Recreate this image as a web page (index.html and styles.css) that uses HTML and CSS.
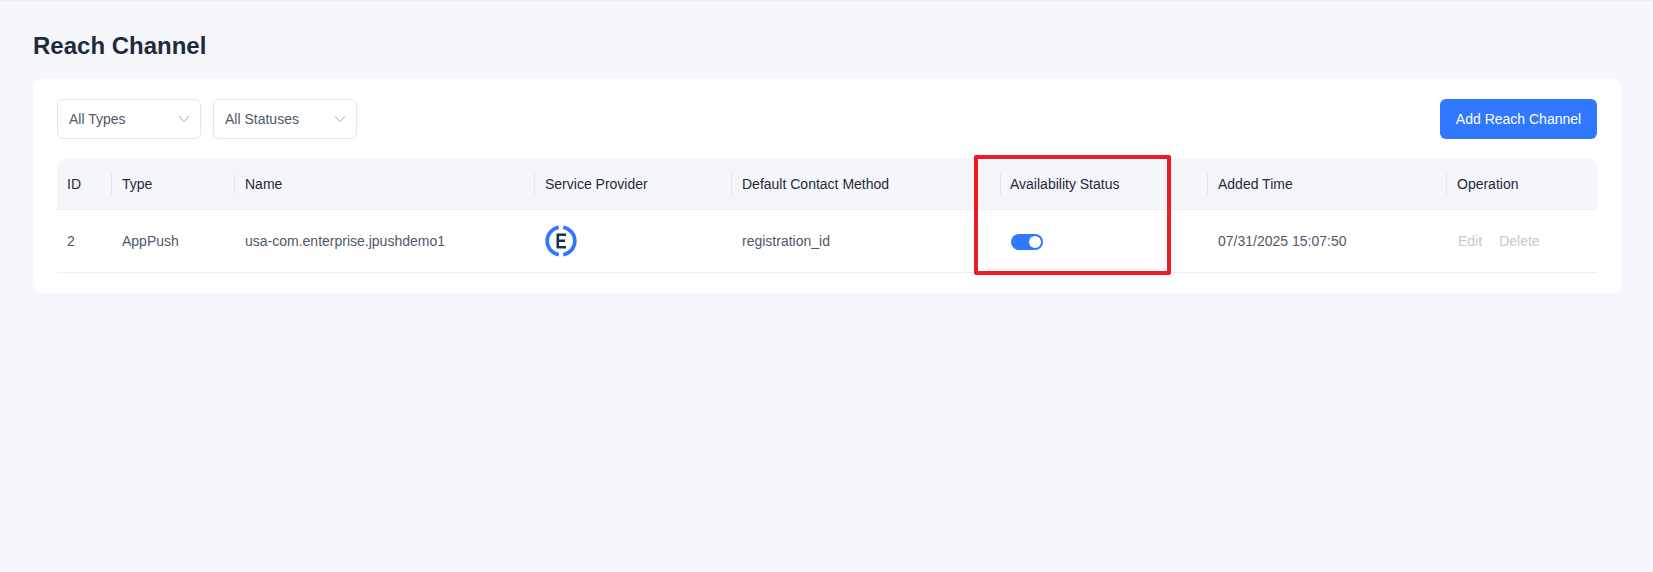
FILE: index.html
```html
<!DOCTYPE html>
<html lang="en">
<head>
    <meta charset="UTF-8" />
    <title>Reach Channel</title>
    <link rel="stylesheet" href="styles.css">
</head>
<body>
<div class="topline"></div>
<main class="page">
    <h1>Reach Channel</h1>
    <section class="card">
        <div class="toolbar">
            <div class="filters">
                <div class="select"><span>All Types</span>
                    <svg class="chevron" viewBox="0 0 12 8"><path d="M1 1.500l5 5 5-5" /></svg>
                </div>
                <div class="select"><span>All Statuses</span>
                    <svg class="chevron" viewBox="0 0 12 8"><path d="M1 1.500l5 5 5-5" /></svg>
                </div>
            </div>
            <button class="btn">Add Reach Channel</button>
        </div>
        <table class="table">
            <colgroup>
                <col class="col-id" /><col class="col-type" /><col class="col-name" /><col class="col-provider" />
                <col class="col-contact" /><col class="col-status" /><col class="col-time" /><col class="col-op" />
            </colgroup>
            <thead>
                <tr>
                    <th><div class="th-first">ID</div></th>
                    <th><div>Type</div></th>
                    <th><div>Name</div></th>
                    <th><div>Service Provider</div></th>
                    <th><div>Default Contact Method</div></th>
                    <th><div class="th-status">Availability Status</div></th>
                    <th><div>Added Time</div></th>
                    <th><div>Operation</div></th>
                </tr>
            </thead>
            <tbody>
                <tr>
                    <td>2</td>
                    <td>AppPush</td>
                    <td>usa-com.enterprise.jpushdemo1</td>
                    <td>
                        <svg class="provider" viewBox="0 0 32 32">
                            <path class="ring" d="M13.800 2.200A14 14 0 0 0 13.800 29.800" />
                            <path class="ring" d="M18.200 2.200A14 14 0 0 1 18.200 29.800" />
                            <path class="letter" d="M11.500 9.800h9.500M12.800 8.500v15M11.500 22.200h9.500M11.500 15.800h8.500" />
                        </svg>
                    </td>
                    <td>registration_id</td>
                    <td><span class="switch"><span class="knob"></span></span></td>
                    <td>07/31/2025 15:07:50</td>
                    <td class="ops"><a>Edit</a><a>Delete</a></td>
                </tr>
            </tbody>
        </table>
    </section>
</main>
<div class="highlight"></div>
</body>
</html>
```

FILE: styles.css
```css
* {
    box-sizing: border-box;
    margin: 0;
    padding: 0;
}

body {
    background: #f5f7fb;
    color: #1f2a3d;
    font-family: "Liberation Sans", Arial, sans-serif;
    font-size: 14px;
    height: 572px;
    overflow: hidden;
    position: relative;
}

.topline {
    height: 1px;
    background: #eef0f4;
}

.page {
    padding: 0 32px 0 33px;
}

h1 {
    font-size: 24px;
    font-weight: 700;
    line-height: 30px;
    margin-top: 30px;
    margin-bottom: 18px;
    color: #1f2a3d;
}

.card {
    background: #fff;
    border-radius: 8px;
    padding: 20px 24px;
}

.toolbar {
    display: flex;
    justify-content: space-between;
    margin-bottom: 20px;
}

.filters {
    display: flex;
    gap: 12px;
}

.select {
    width: 144px;
    height: 40px;
    border: 1px solid #e5e6eb;
    border-radius: 6px;
    padding: 0 10px 0 11px;
    display: flex;
    align-items: center;
    justify-content: space-between;
    color: #4e5969;
}

.chevron {
    width: 12px;
    height: 8px;
    fill: none;
    stroke: #c4c8d0;
    stroke-width: 1.2;
}

.btn {
    width: 157px;
    height: 40px;
    background: #3078fd;
    color: #fff;
    border: none;
    border-radius: 6px;
    font-family: inherit;
    font-size: 14px;
}

.table {
    width: 1540px;
    border-collapse: collapse;
    table-layout: fixed;
}

.col-id { width: 54px; }
.col-type { width: 123px; }
.col-name { width: 300px; }
.col-provider { width: 197px; }
.col-contact { width: 269px; }
.col-status { width: 207px; }
.col-time { width: 239px; }
.col-op { width: 151px; }

.table th {
    height: 50px;
    background: #f5f6fa;
    border-bottom: 1px solid #eceef2;
    font-weight: 400;
    text-align: left;
    color: #1f2a3d;
}

.table th:first-child {
    border-top-left-radius: 8px;
}

.table th:last-child {
    border-top-right-radius: 8px;
}

.table th div {
    border-left: 1px solid #e5e6eb;
    line-height: 22px;
    padding-left: 10px;
}

.table th .th-first {
    border-left: none;
}

.table th .th-status {
    padding-left: 9px;
}

.table td {
    height: 63px;
    padding-left: 11px;
    border-bottom: 1px solid #eceef2;
    color: #4e5969;
}

.table td:first-child {
    padding-left: 10px;
}

.table td.ops {
    padding-left: 12px;
}

.provider {
    display: block;
    width: 32px;
    height: 32px;
}

.ring {
    fill: none;
    stroke: #3078fd;
    stroke-width: 3.6;
}

.letter {
    fill: none;
    stroke: #1b2f4b;
    stroke-width: 2.6;
}

.switch {
    display: block;
    width: 32px;
    height: 16px;
    margin-top: 2px;
    background: #3078fd;
    border-radius: 8px;
    position: relative;
}

.knob {
    position: absolute;
    top: 2px;
    right: 2px;
    width: 12px;
    height: 12px;
    border-radius: 50%;
    background: #fff;
}

.ops a {
    color: #c4c8d0;
    margin-right: 17px;
}

.highlight {
    position: absolute;
    left: 974px;
    top: 155px;
    width: 197px;
    height: 120px;
    border: 4px solid #ed1c24;
    border-radius: 2px;
}
```
